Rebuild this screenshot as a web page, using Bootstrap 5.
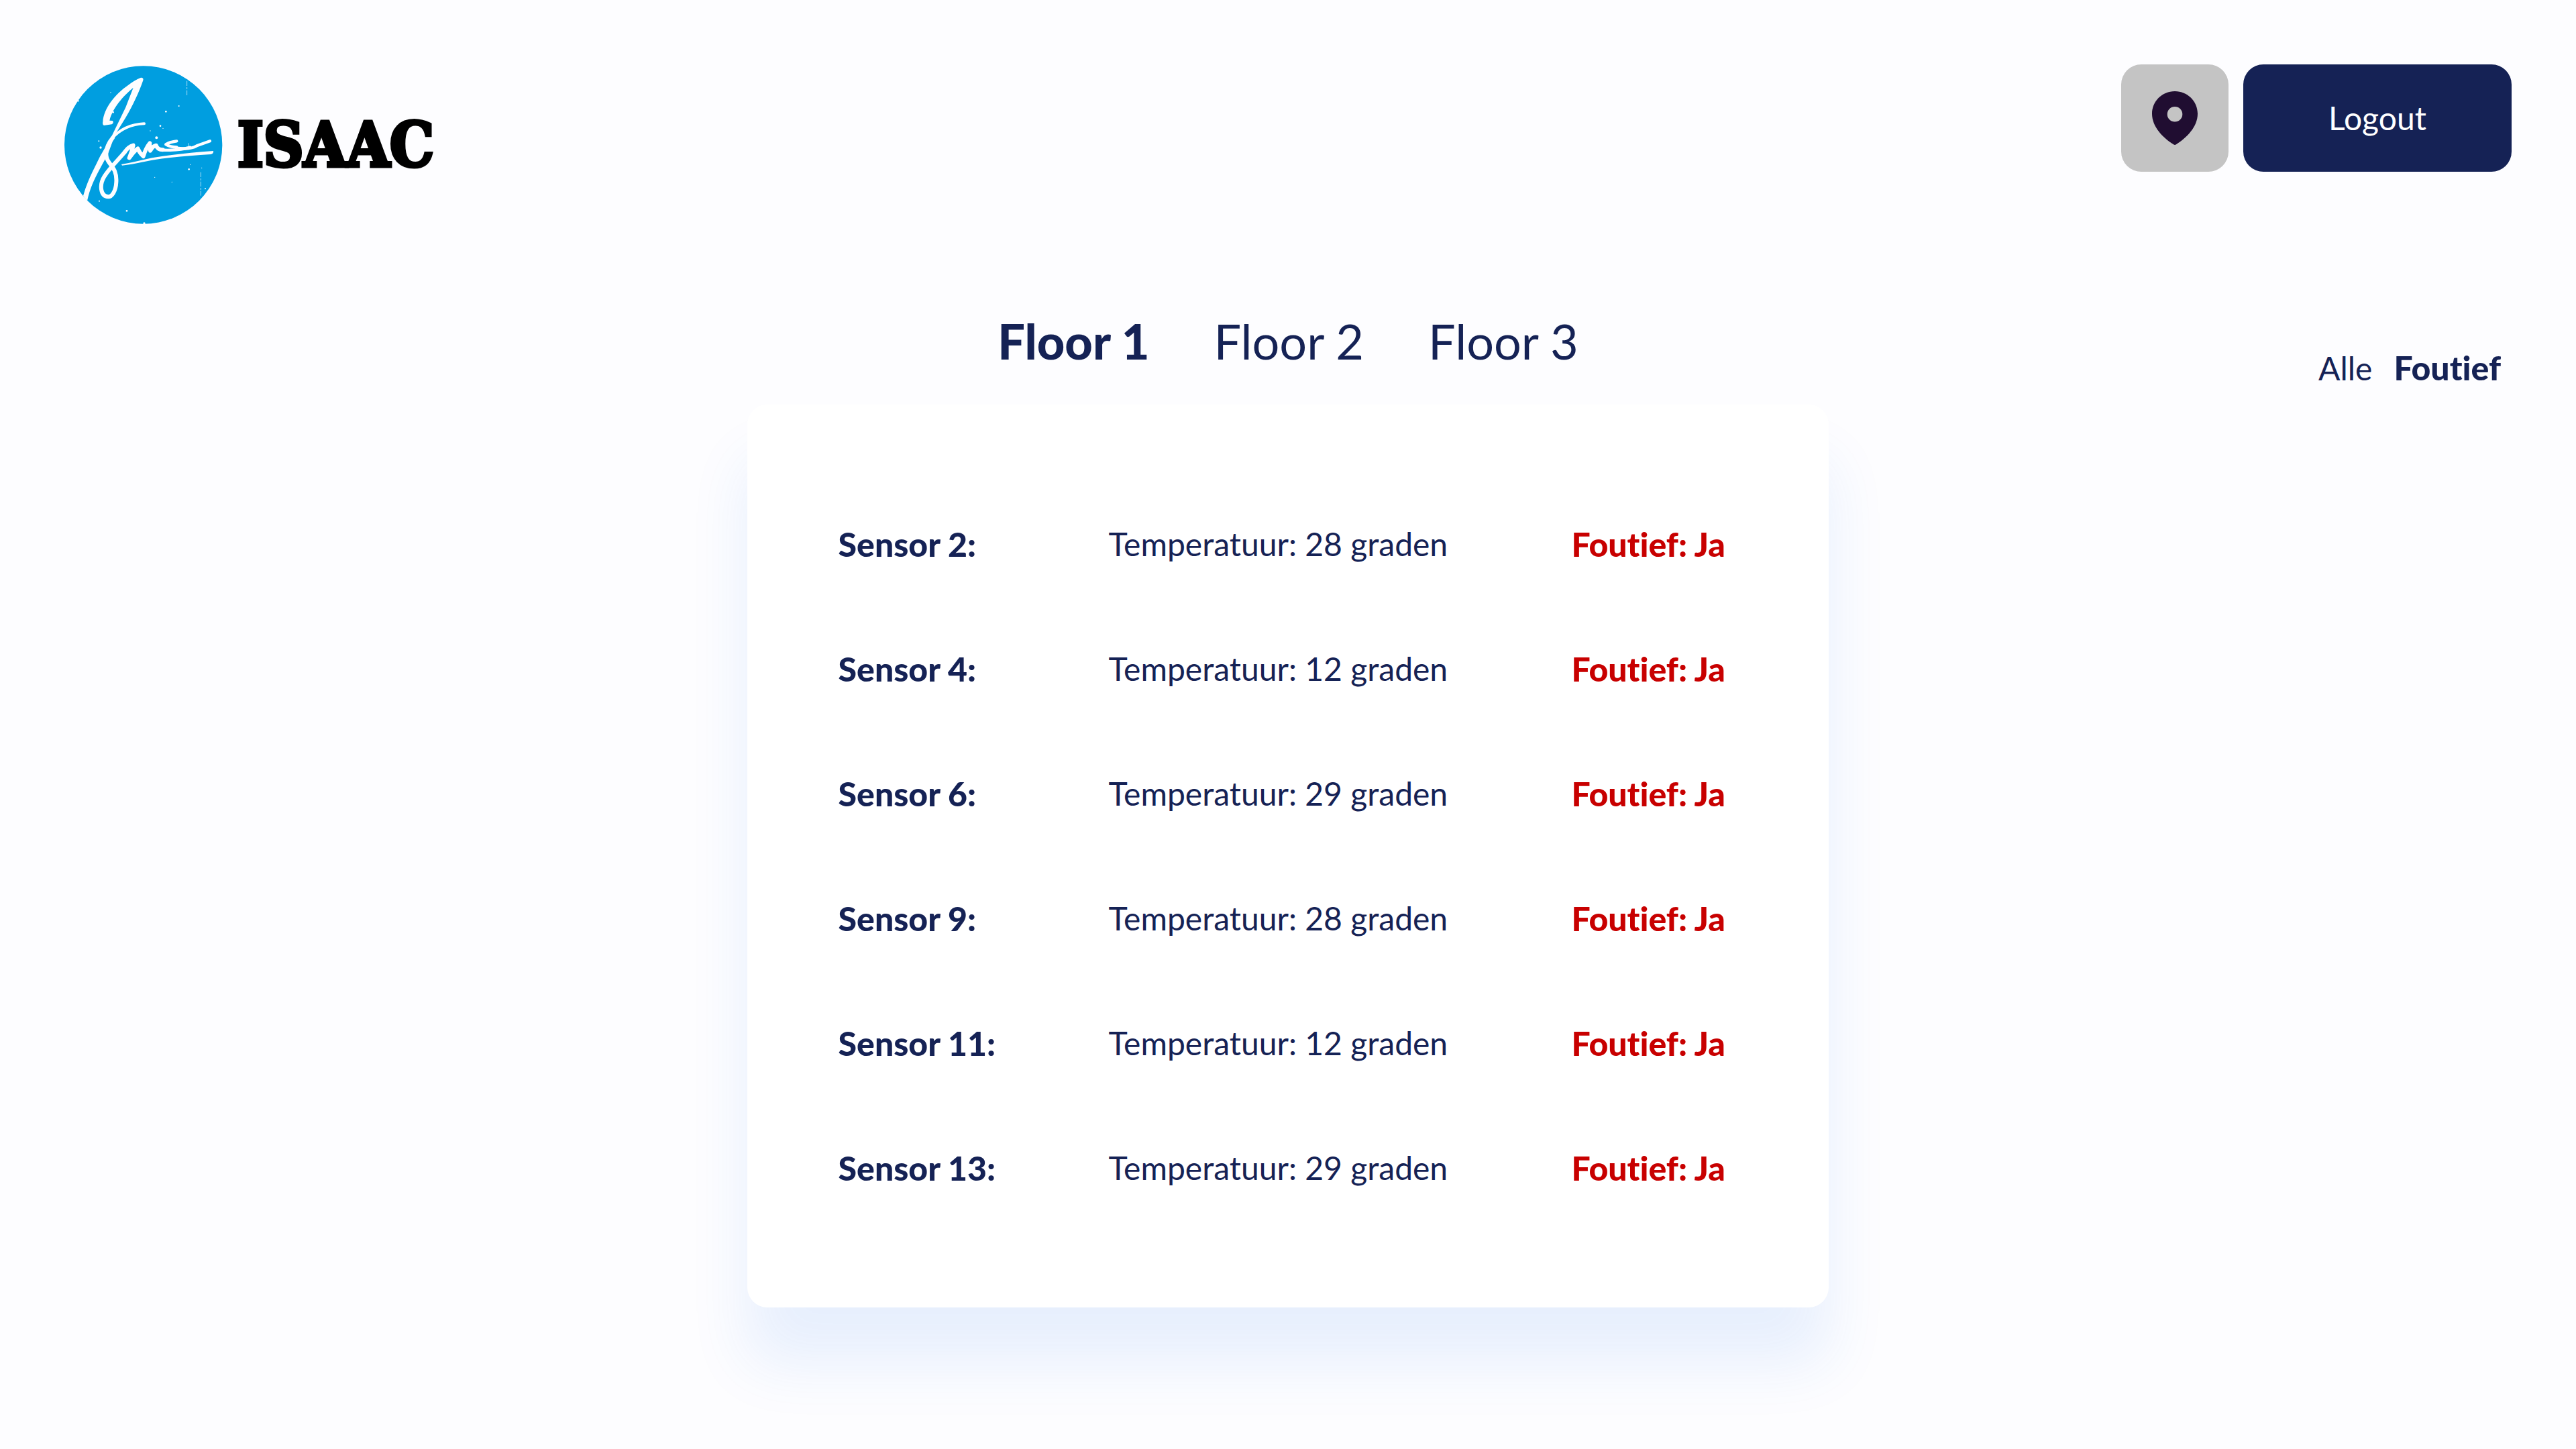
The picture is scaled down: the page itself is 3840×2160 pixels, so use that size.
<!DOCTYPE html>
<html lang="nl">
<head>
<meta charset="utf-8">
<meta name="viewport" content="width=device-width, initial-scale=1">
<title>ISAAC sensoren</title>
<link href="https://cdn.jsdelivr.net/npm/bootstrap@5.3.0/dist/css/bootstrap.min.css" rel="stylesheet">
<style>
  body { background: #fdfdff; color: #152255; font-family: Lato, "Noto Sans", sans-serif; font-size: 48px; line-height: 64px; }
  body, button { font-variant-ligatures: none; }
  .page-head { padding: 96px 96px 0; }
  .brand-mark { width: 240px; height: 240px; }
  .brand-name { color: #000; font: bold 92px/96px "DejaVu Serif Condensed", "DejaVu Serif", serif; -webkit-text-stroke: 5px #000; margin-left: 18px; }
  .head-actions { gap: 22px; }
  .btn-tile { height: 160px; border: 0; border-radius: 30px; padding: 0; font-size: 48px; }
  .btn-pin, .btn-pin:hover { width: 160px; background: #c4c4c4; }
  .btn-logout, .btn-logout:hover { width: 400px; background: #152255; color: #fff; }
  .toolbar { padding: 128px 96px 0; }
  .plain-btn { border: 0; background: none; color: inherit; padding: 0; }
  .heavy { font-weight: 900; }
  .floors { gap: 96px; font-size: 72px; line-height: 88px; }
  .filters { padding-top: 52px; }
  .filters .plain-btn { padding: 0 16px; }
  .filters .heavy, .sensors .heavy { font-size: 50px; }
  .sensor-card { width: 42%; margin: 22px auto 212px; padding: 115px 136px; background: #fff; border-radius: 30px; box-shadow: 0 84px 88px rgba(43, 113, 235, .1); }
  .sensors { width: 100%; table-layout: fixed; }
  .sensors td, .sensors th { height: 186px; padding: 0; vertical-align: middle; white-space: nowrap; }
  .c-name { width: 403px; }
  .c-state { width: 248px; }
  .fault { color: #c80000; }
</style>
</head>
<body>
<header class="page-head d-flex justify-content-between align-items-start">
  <a href="#" class="d-flex align-items-center text-decoration-none" aria-label="ISAAC">
    <svg class="brand-mark" viewBox="48 48 720 720" aria-hidden="true">
      <circle cx="401" cy="408" r="353" fill="#009ee0"/>
      <!-- signature: long down stroke, then the flag at its top -->
      <path fill="#fdfdff" d="M132 636C150 570 178 520 208 458L258 372L322 240L356 152C310 190 262 245 250 299L264 300Q270 310 260 316L225 321Q217 318 220 305C224 240 282 176 330 143Q362 118 390 107Q403 106 400 119C385 165 352 236 322 286L275 362L242 450C205 520 168 575 150 658Z"/>
      <g fill="none" stroke="#fdfdff" stroke-linecap="round" stroke-linejoin="round">
        <path stroke-width="12" d="M262 378C292 344 340 316 405 313"/>
        <path stroke-width="18" d="M264 376C238 408 230 440 238 468C248 500 284 510 280 574C278 616 260 640 244 640C208 638 204 586 226 550C252 508 290 475 318 440"/>
        <path stroke-width="18" d="M318 440Q334 416 356 410Q350 438 338 466Q362 434 376 424Q384 444 401 459Q412 422 430 400Q428 420 432 434Q444 412 458 410Q464 430 488 430"/>
        <path stroke-width="13" d="M550 391Q515 396 502 406Q518 418 550 418M486 431Q560 434 610 419"/>
        <path stroke-width="13" d="M548 422Q610 430 640 412L699 391"/>
      </g>
      <g fill="#fdfdff">
        <path d="M303 495L350 486L440 466Q560 446 714 435Q716 446 704 450Q560 458 440 476L350 494L306 500Z"/>
        <circle cx="460" cy="376" r="6"/><circle cx="210" cy="420" r="5"/><circle cx="202" cy="391" r="3"/>
        <circle cx="266" cy="262" r="4"/><circle cx="477" cy="323" r="4"/><circle cx="489" cy="334" r="2"/>
        <circle cx="502" cy="259" r="4"/><circle cx="560" cy="234" r="3"/><circle cx="605" cy="517" r="4"/>
        <circle cx="611" cy="496" r="2"/><circle cx="327" cy="703" r="4"/><circle cx="204" cy="659" r="3"/>
        <circle cx="678" cy="604" r="3"/><circle cx="452" cy="553" r="2"/><circle cx="529" cy="574" r="2"/>
        <circle cx="255" cy="174" r="2"/><circle cx="405" cy="759" r="5"/><circle cx="109" cy="211" r="4"/>
        <circle cx="432" cy="345" r="2"/><circle cx="662" cy="511" r="2"/>
      </g>
      <path d="M596 122V192M658 530V635M604 400V425" fill="none" stroke="#fdfdff" stroke-width="2" stroke-dasharray="22 6 9 5"/>
    </svg>
    <span class="brand-name">ISAAC</span>
  </a>
  <div class="head-actions d-flex">
    <button type="button" class="btn btn-tile btn-pin d-flex align-items-center justify-content-center" aria-label="Locatie">
      <svg width="68" height="80" viewBox="0 0 68 80" aria-hidden="true"><path fill="#200d31" fill-rule="evenodd" d="M34 0C15 0 0 15 0 33.500C0 53 16 69 32 79.300Q34 80.500 36 79.300C52 69 68 53 68 33.500C68 15 53 0 34 0ZM34 23A11.300 11.300 0 1 1 34 45.600A11.300 11.300 0 1 1 34 23Z"/></svg>
    </button>
    <button type="button" class="btn btn-tile btn-logout">Logout</button>
  </div>
</header>
<main>
  <div class="toolbar row g-0">
    <div class="col"></div>
    <nav class="floors col-auto d-flex align-items-start" aria-label="Verdiepingen">
      <button type="button" class="plain-btn heavy">Floor 1</button>
      <button type="button" class="plain-btn">Floor 2</button>
      <button type="button" class="plain-btn">Floor 3</button>
    </nav>
    <div class="filters col d-flex justify-content-end align-items-baseline">
      <button type="button" class="plain-btn">Alle</button>
      <button type="button" class="plain-btn heavy">Foutief</button>
    </div>
  </div>
  <section class="sensor-card">
    <table class="sensors">
      <colgroup><col class="c-name"><col><col class="c-state"></colgroup>
      <tbody>
        <tr><th scope="row" class="heavy">Sensor 2:</th><td>Temperatuur: 28 graden</td><td class="fault heavy">Foutief: Ja</td></tr>
        <tr><th scope="row" class="heavy">Sensor 4:</th><td>Temperatuur: 12 graden</td><td class="fault heavy">Foutief: Ja</td></tr>
        <tr><th scope="row" class="heavy">Sensor 6:</th><td>Temperatuur: 29 graden</td><td class="fault heavy">Foutief: Ja</td></tr>
        <tr><th scope="row" class="heavy">Sensor 9:</th><td>Temperatuur: 28 graden</td><td class="fault heavy">Foutief: Ja</td></tr>
        <tr><th scope="row" class="heavy">Sensor 11:</th><td>Temperatuur: 12 graden</td><td class="fault heavy">Foutief: Ja</td></tr>
        <tr><th scope="row" class="heavy">Sensor 13:</th><td>Temperatuur: 29 graden</td><td class="fault heavy">Foutief: Ja</td></tr>
      </tbody>
    </table>
  </section>
</main>
<script src="https://cdn.jsdelivr.net/npm/bootstrap@5.3.0/dist/js/bootstrap.bundle.min.js"></script>
</body>
</html>
